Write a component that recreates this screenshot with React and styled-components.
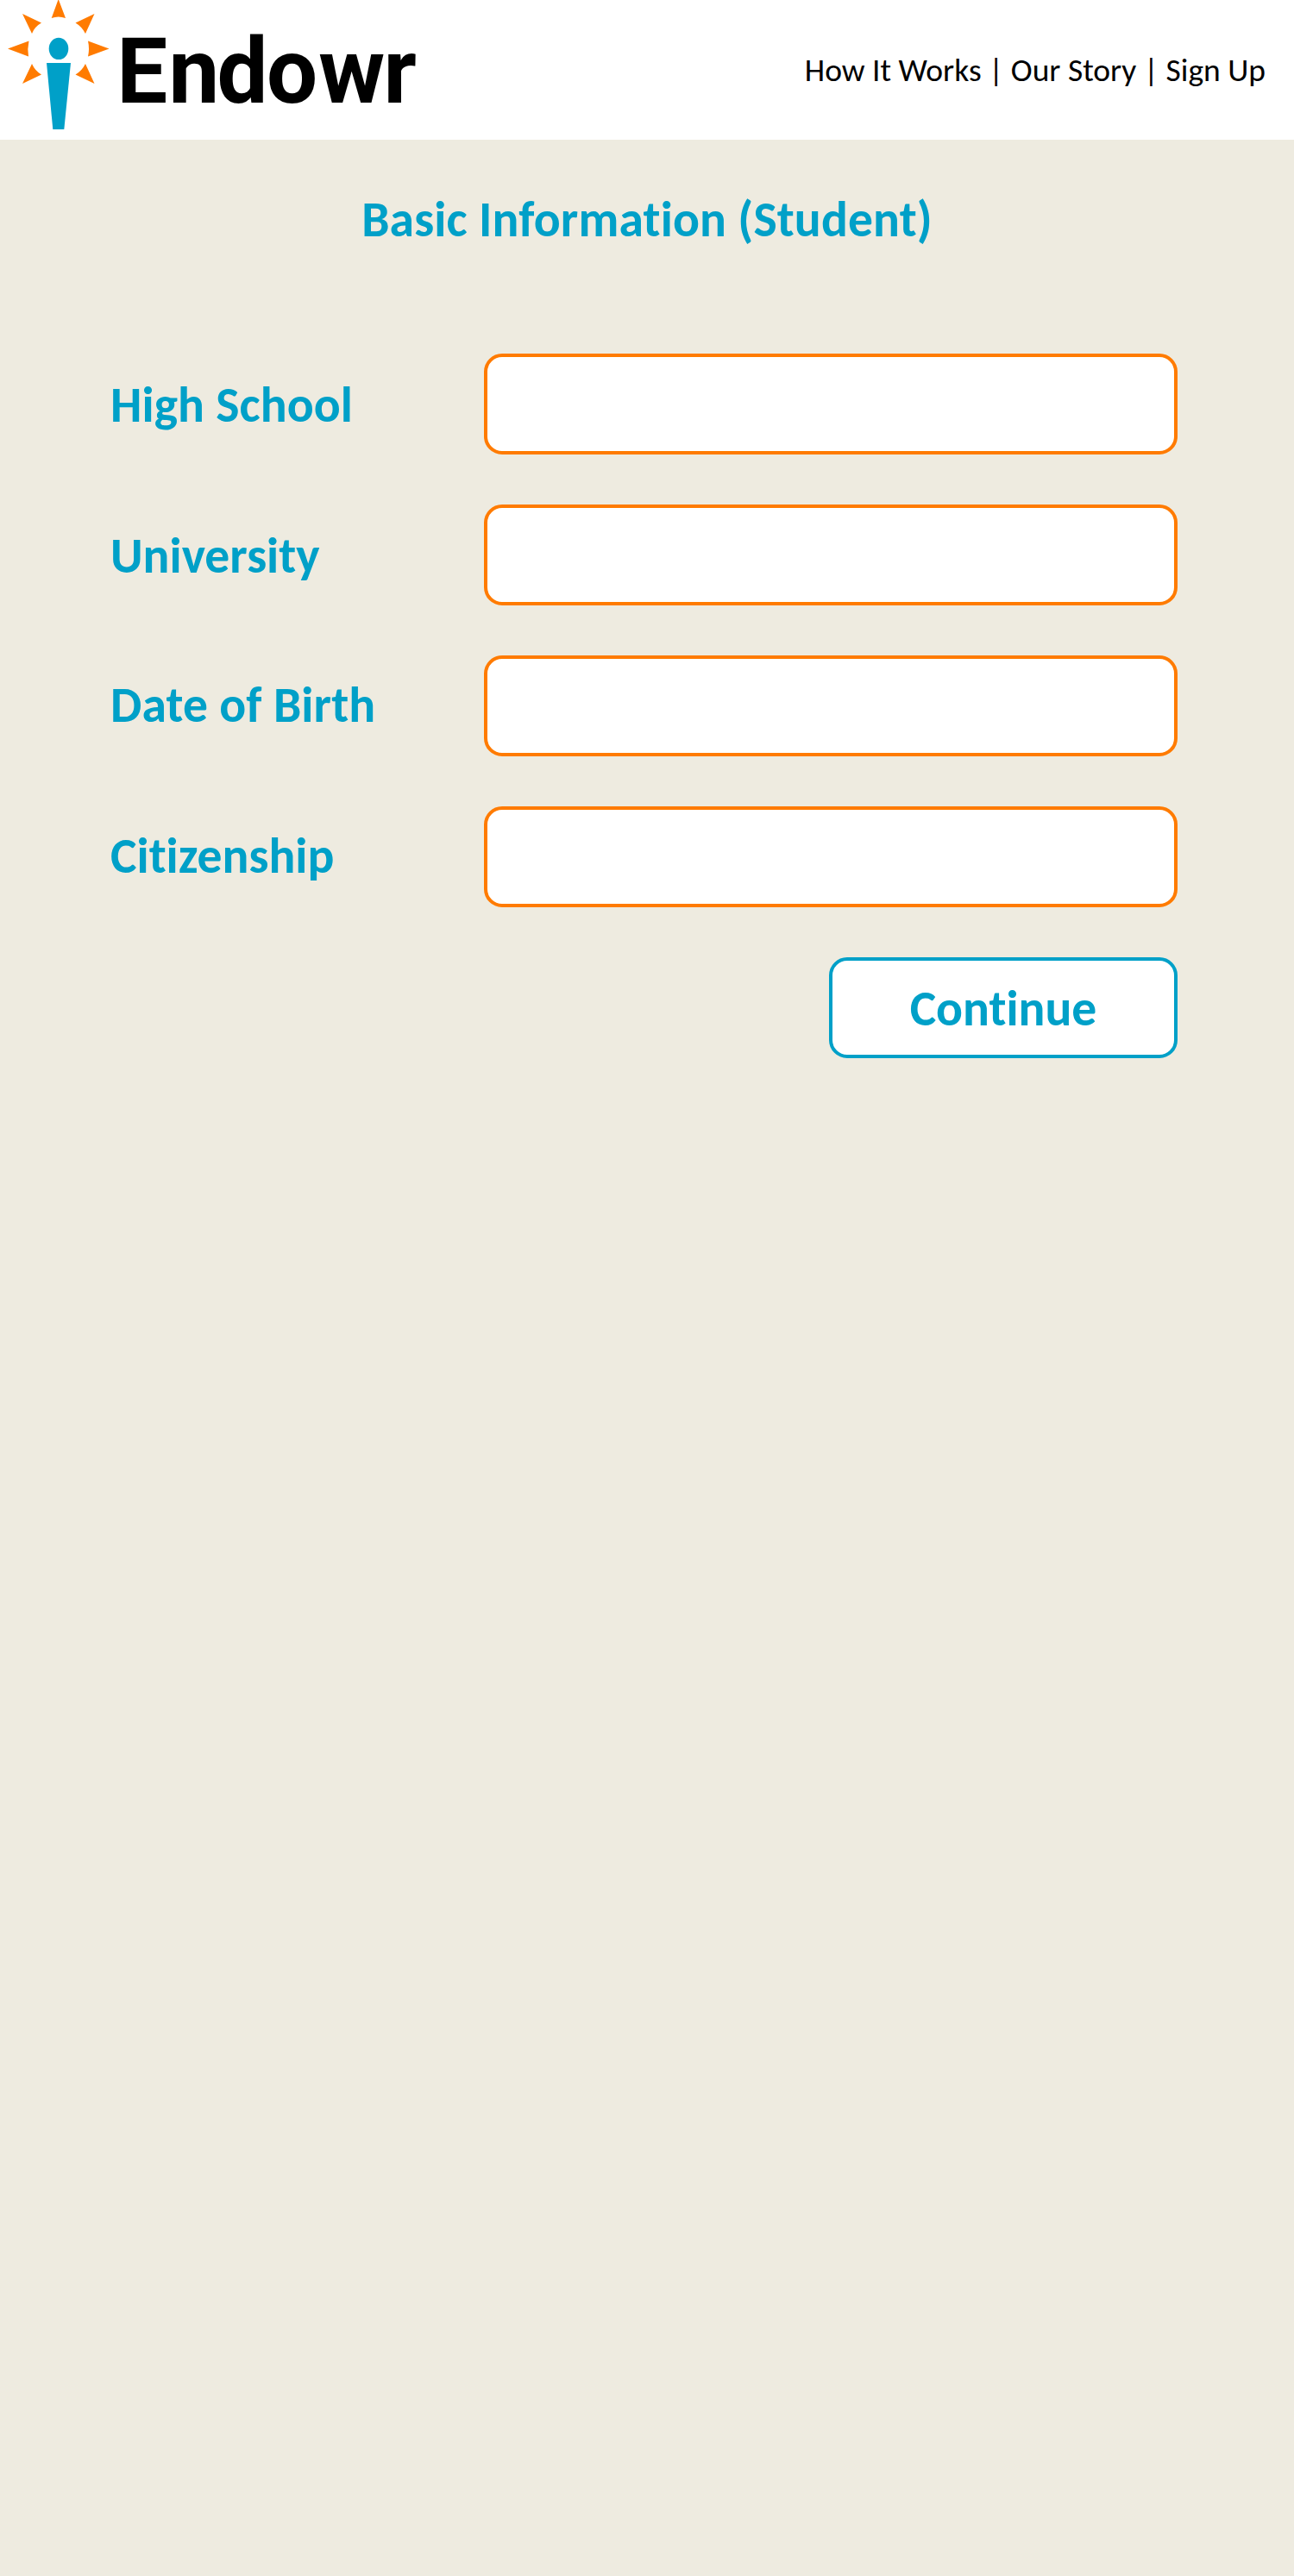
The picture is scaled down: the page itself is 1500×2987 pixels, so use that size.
import React from "react";
import styled, { createGlobalStyle } from "styled-components";

const blue = "#00a0c8";
const orange = "#ff7b00";
const sans = "Carlito, Calibri, Lato, sans-serif";

const GlobalStyle = createGlobalStyle`
  body { margin: 0; background: #eeebe0; font-family: ${sans}; }
  * { box-sizing: border-box; }
`;
const Page = styled.div`
  min-height: 2987px;
  background: #eeebe0;
`;
const Header = styled.header`
  display: flex;
  justify-content: space-between;
  align-items: flex-start;
  height: 162px;
  background: #fff;
`;
const Logo = styled.svg`
  display: block;
  width: 500px;
  height: 162px;
`;
const Wordmark = styled.text`
  font: 700 104.8px Roboto, sans-serif;
  fill: #000;
`;
const Nav = styled.nav`
  margin: 57px 33px 0 0;
  font-size: 37.5px;
  line-height: 48px;
  font-variant-ligatures: none;
  color: #000;
  white-space: pre;
`;
const NavLink = styled.a`
  color: inherit;
  text-decoration: none;
`;
const Title = styled.h1`
  margin: 0;
  padding-top: 57px;
  height: 248px;
  text-align: center;
  font-size: 57.6px;
  line-height: 70px;
  letter-spacing: 0.15px;
  font-weight: 700;
  font-variant-ligatures: none;
  color: ${blue};
`;
const Form = styled.form`
  display: flex;
  flex-direction: column;
  gap: 58px;
  padding: 0 135px 0 128px;
`;
const Row = styled.div`
  display: flex;
  justify-content: space-between;
  align-items: center;
  height: 117px;
`;
const Label = styled.label`
  padding-bottom: ${(p) => p.$lift || 0}px;
  font-size: 57.6px;
  line-height: 70px;
  letter-spacing: ${(p) => p.$spacing || 0}px;
  font-weight: 700;
  font-variant-ligatures: none;
  color: ${blue};
`;
const Field = styled.input`
  width: 804px;
  height: 117px;
  padding: 0 24px;
  border: 4px solid ${orange};
  border-radius: 21px;
  background: #fff;
  outline: none;
  font: 400 48px ${sans};
`;
const Continue = styled.button`
  align-self: flex-end;
  width: 404px;
  height: 117px;
  padding: 0;
  border: 4px solid ${blue};
  border-radius: 21px;
  background: #fff;
  color: ${blue};
  font: 700 57.6px/70px ${sans};
  font-variant-ligatures: none;
`;

const fields = [
  { name: "High School", spacing: 0.1 },
  { name: "University" },
  { name: "Date of Birth", lift: 3, spacing: 0.15 },
  { name: "Citizenship", lift: 3 },
];

export default function App() {
  return (
    <Page>
      <GlobalStyle />
      <Header>
        <Logo viewBox="0 0 500 162" role="img" aria-label="Endowr">
          <g fill={orange}>
            <path d="M67.7 -1L76 21Q67.7 18 59.7 21Z" />
            <path d="M126.5 56.5L102 47.5Q104 56.5 102 65.5Z" />
            <path d="M9 56.5L33.5 47.5Q31.5 56.5 33 65.5Z" />
            <path d="M26 16L48 26.5Q40 31 37 39Z" />
            <path d="M109.5 16L87.5 26.5Q95 31 99 39Z" />
            <path d="M26 97L37 74Q40.5 82 48 86.5Z" />
            <path d="M109.5 97L99 74Q95 82 87.5 86.5Z" />
          </g>
          <g fill={blue}>
            <ellipse cx="68" cy="56.4" rx="11.3" ry="12.7" />
            <path d="M54 73H82L74.3 150H61.3Z" />
          </g>
          <Wordmark x="135.3 195.6 251.5 309 369.3 444.5" y="118.5">Endowr</Wordmark>
        </Logo>
        <Nav>
          <NavLink>How It Works</NavLink> | <NavLink>Our Story</NavLink> | <NavLink>Sign Up</NavLink>
        </Nav>
      </Header>
      <Title>Basic Information (Student)</Title>
      <Form>
        {fields.map(({ name, lift, spacing }) => (
          <Row key={name}>
            <Label htmlFor={name} $lift={lift} $spacing={spacing}>{name}</Label>
            <Field id={name} />
          </Row>
        ))}
        <Continue type="button">Continue</Continue>
      </Form>
    </Page>
  );
}
